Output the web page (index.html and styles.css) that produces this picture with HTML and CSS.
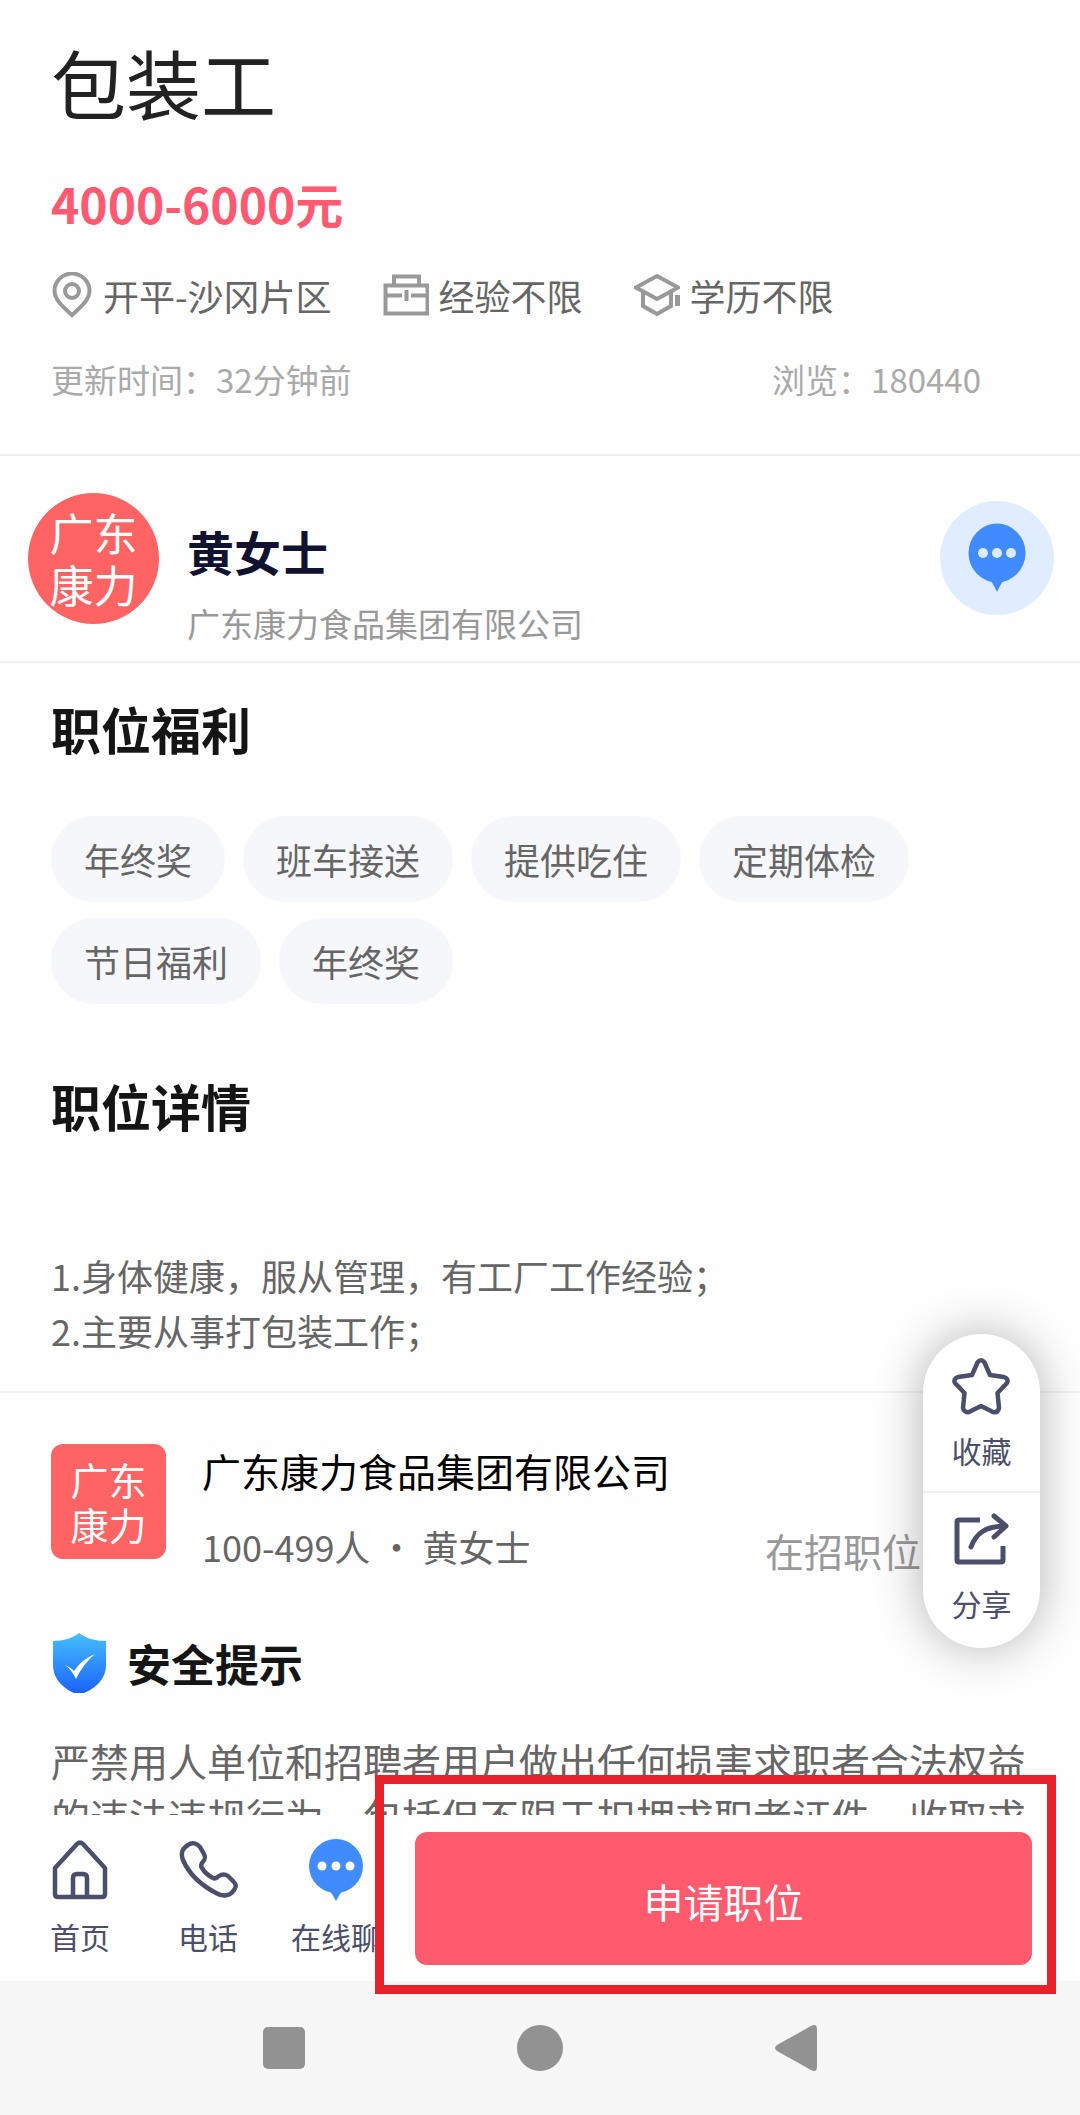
FILE: index.html
```
<!DOCTYPE html>
<html lang="zh-CN">
<head>
    <meta charset="UTF-8">
    <meta name="viewport" content="width=device-width, initial-scale=1.0">
    <title>包装工</title>
    <link rel="stylesheet" href="styles.css">
</head>
<body>
    <main>
        <!-- 职位信息 -->
        <section class="job">
            <h1>包装工</h1>
            <p class="salary">4000-6000元</p>
            <ul class="meta">
                <li>
                    <svg width="42" height="46" viewBox="0 0 42 46" fill="none" stroke="#999" stroke-width="4">
                        <path d="M21 43C14.500 37 3.500 28.500 3.500 19a17.500 17.500 0 0 1 35 0C38.500 28.500 27.500 37 21 43Z"/>
                        <circle cx="21" cy="19" r="7"/>
                    </svg>
                    开平-沙冈片区
                </li>
                <li>
                    <svg width="46" height="46" viewBox="0 0 46 46" fill="none" stroke="#999" stroke-width="4">
                        <path d="M2.500 13.500h42v28h-42zM11 13.500v-9h25v9"/>
                        <path d="M2 23.500h17M28 23.500h17M23.500 18v11"/>
                    </svg>
                    经验不限
                </li>
                <li>
                    <svg width="46" height="46" viewBox="0 0 46 46" fill="none" stroke="#999" stroke-width="4">
                        <path d="M2 15.500 23 4 44 15.500 23 27Z"/>
                        <path d="M9 19v15l14 8 14-8V19"/>
                        <path d="M43.500 23v11" stroke-width="5"/>
                    </svg>
                    学历不限
                </li>
            </ul>
            <div class="stat">
                <span>更新时间：32分钟前</span>
                <span>浏览：180440</span>
            </div>
        </section>

        <!-- 联系人 -->
        <section class="contact">
            <div class="avatar">广东<br>康力</div>
            <div class="contact_text">
                <h2>黄女士</h2>
                <p>广东康力食品集团有限公司</p>
            </div>
            <button class="chat" aria-label="聊天">
                <svg width="58" height="70" viewBox="0 0 58 70">
                    <g fill="#408cff"><ellipse cx="29" cy="30" rx="28.500" ry="29.500"/><path d="M20 55h18q-4 3-9 14-5-11-9-14Z"/></g>
                    <g fill="#deebff"><circle cx="15" cy="30" r="5"/><circle cx="29" cy="30" r="5"/><circle cx="43" cy="30" r="5"/></g>
                </svg>
            </button>
        </section>

        <!-- 福利和详情 -->
        <section class="detail">
            <h2>职位福利</h2>
            <ul class="tags">
                <li>年终奖</li>
                <li>班车接送</li>
                <li>提供吃住</li>
                <li>定期体检</li>
                <li>节日福利</li>
                <li>年终奖</li>
            </ul>
            <h2>职位详情</h2>
            <p class="desc">1.身体健康，服从管理，有工厂工作经验；<br>2.主要从事打包装工作；</p>
        </section>

        <!-- 公司 -->
        <section class="company">
            <div class="logo">广东<br>康力</div>
            <div class="company_text">
                <h3>广东康力食品集团有限公司</h3>
                <p>100-499人 · 黄女士</p>
            </div>
            <a href="#" class="jobs">在招职位</a>
        </section>

        <section class="safe">
            <h2>
                <svg width="55" height="62" viewBox="0 0 55 62">
                    <defs>
                        <linearGradient id="shield" x1="0" y1="0" x2="0" y2="1">
                            <stop offset="0" stop-color="#45c0fb"/>
                            <stop offset="1" stop-color="#1c62fe"/>
                        </linearGradient>
                    </defs>
                    <path fill="url(#shield)" d="M28 1C34 6 44 9 55 9v24c0 15-12 24-22 28H23C14 57 2 48 2 33V9C12 9 22 6 28 1Z"/>
                    <path fill="#fff" d="M14 33q5 2 9 6 8-12 21-17-12 10-19 25-4-9-11-14Z"/>
                </svg>
                安全提示
            </h2>
            <p>严禁用人单位和招聘者用户做出任何损害求职者合法权益的违法违规行为，包括但不限于扣押求职者证件、收取求职者财物等。</p>
        </section>

        <!-- 右侧悬浮按钮 -->
        <div class="float">
            <button>
                <svg width="60" height="58" viewBox="0 0 60 58" fill="none" stroke="#4c4f6b" stroke-width="4.500" stroke-linejoin="round">
                    <path d="M25.500 4.500Q29 0 32.500 4.500L38 17l14 2q5 2 3 6L45.500 35 47 50q-1 5-6 4L29 48l-12 6q-5 1-6-4l1.500-15L3 25q-2-4 3-6l14-2Z"/>
                </svg>
                收藏
            </button>
            <button>
                <svg width="60" height="58" viewBox="0 0 60 58" fill="none" stroke="#4c4f6b" stroke-width="5" stroke-linejoin="round">
                    <path d="M28 9H7q-2 0-2 2v38q0 2 2 2h42q2 0 2-2V35"/>
                    <path d="M19 36C24 22 34 15 54 15M42 5l12 10-12 11" stroke-linecap="round"/>
                </svg>
                分享
            </button>
        </div>
    </main>

    <footer>
        <nav class="bar">
            <a href="#">
                <svg width="60" height="62" viewBox="0 0 60 62" fill="none" stroke="#4c4f6b" stroke-width="4.500" stroke-linejoin="round">
                    <path d="M5 29 27 5q3-3 6 0l22 24v26q0 3-3 3H8q-3 0-3-3Z"/>
                    <path d="M23 58V39q0-4 4-4h6q4 0 4 4v19"/>
                </svg>
                首页
            </a>
            <a href="#">
                <svg width="60" height="62" viewBox="0 0 60 62" fill="none" stroke="#4c4f6b" stroke-width="4.500" stroke-linejoin="round">
                    <path d="M10 6c4-3 9-2 12 2l4 7c2 4 1 6-2 9-1 2-1 4 0 5 3 5 7 8 11 10 2 1 4 0 6-2 3-2 6-2 9 0l5 5c4 4 3 6 1 9-4 6-11 7-18 3C21 45 11 35 5 21 2 13 5 9 10 6Z"/>
                </svg>
                电话
            </a>
            <a href="#">
                <svg width="60" height="62" viewBox="0 0 60 62">
                    <g fill="#408cff"><circle cx="30" cy="27" r="27"/><path d="M22 50h16q-3 3-8 12-5-9-8-12Z"/></g>
                    <g fill="#fff"><circle cx="16" cy="27" r="4.500"/><circle cx="30" cy="27" r="4.500"/><circle cx="44" cy="27" r="4.500"/></g>
                </svg>
                在线聊
            </a>
            <div class="apply">
                <button>申请职位</button>
                <span class="mark"></span>
            </div>
        </nav>

        <!-- 系统导航键 -->
        <div class="system">
            <svg width="48" height="48"><rect x="3" y="3" width="42" height="42" rx="5"/></svg>
            <svg width="48" height="48"><circle cx="24" cy="24" r="23"/></svg>
            <svg width="48" height="48"><path d="M5 21 39 2q6-3 6 3v38q0 6-6 3L5 27q-4-3 0-6Z"/></svg>
        </div>
    </footer>
</body>
</html>
```
FILE: styles.css
```
*{margin: 0;padding: 0;box-sizing: border-box;}
body{
    display: flex;
    flex-direction: column;
    height: 100vh;
    overflow: hidden;
    background: #fefefe;
    color: #666;
    font-family: "Noto Sans CJK SC", sans-serif;
    font-size: 36px;
}
ul{list-style: none;}
a{color: inherit;text-decoration: none;}
button{border: 0;background: none;color: inherit;font: inherit;cursor: pointer;}
svg{display: block;flex: none;}

main{position: relative;flex: 1;min-height: 0;overflow: hidden;}
section{padding: 0 51px;}
h2{font-size: 50px;line-height: 64px;color: #151515;}

/* 职位信息 */
.job{padding-top: 37px;padding-bottom: 51px;border-bottom: 2px solid #f0f0f0;}
.job h1{font-size: 75px;font-weight: 400;line-height: 90px;color: #222;}
.salary{margin-top: 44px;font-size: 48px;font-weight: 700;line-height: 64px;color: #ff5a72;}
.meta{display: flex;gap: 51px;margin-top: 34px;line-height: 52px;}
.meta li{display: flex;align-items: center;gap: 10px;}
.stat{
    display: flex;
    justify-content: space-between;
    margin-top: 34px;
    padding-right: 48px;
    font-size: 33px;
    line-height: 48px;
    color: #aaa;
}

/* 联系人 */
.contact{
    display: flex;
    align-items: flex-start;
    padding: 37px 26px 14px 28px;
    border-bottom: 2px solid #f0f0f0;
}
.avatar{
    width: 131px;
    height: 131px;
    padding-top: 13px;
    border-radius: 50%;
    background: #ff6464;
    color: #fff;
    font-size: 44px;
    line-height: 52px;
    text-align: center;
}
.contact_text{flex: 1;margin-left: 28px;padding-top: 26px;}
.contact_text h2{font-size: 47px;color: #10122f;}
.contact_text p{margin-top: 16px;font-size: 33px;line-height: 48px;color: #999;}
.chat{
    display: flex;
    align-items: center;
    justify-content: center;
    width: 114px;
    height: 114px;
    margin-top: 8px;
    border-radius: 50%;
    background: #e0ecff;
}

/* 福利和详情 */
.detail{padding-top: 33px;padding-bottom: 33px;border-bottom: 2px solid #f0f0f0;}
.tags{display: flex;flex-wrap: wrap;gap: 16px 18px;margin: 56px 0 69px;}
.tags li{padding: 0 33px;border-radius: 43px;background: #f6f7fb;line-height: 86px;}
.desc{margin-top: 111px;line-height: 55px;}

/* 公司 */
.company{display: flex;padding-top: 49px;}
.logo{
    width: 115px;
    height: 115px;
    margin-top: 2px;
    padding-top: 12px;
    border-radius: 12px;
    background: #ff6464;
    color: #fff;
    font-size: 38px;
    line-height: 45px;
    text-align: center;
}
.company_text{flex: 1;margin-left: 36px;}
.company h3{font-size: 39px;font-weight: 400;line-height: 56px;color: #000;}
.company p{margin-top: 24px;line-height: 48px;}
.jobs{align-self: flex-end;margin-right: 108px;font-size: 39px;line-height: 40px;color: #999;}

.safe{padding-top: 61px;}
.safe h2{display: flex;align-items: center;gap: 21px;font-size: 44px;}
.safe p{margin-top: 38px;font-size: 39px;line-height: 55px;}

.float{
    position: absolute;
    right: 40px;
    bottom: 167px;
    width: 117px;
    border-radius: 59px;
    background: #fff;
    box-shadow: 0 0 48px rgba(0, 0, 0, .3);
    color: #4c4f6b;
}
.float button{
    display: flex;
    flex-direction: column;
    align-items: center;
    gap: 12px;
    width: 100%;
    height: 157px;
    padding-top: 24px;
    font-size: 30px;
    line-height: 44px;
}
.float button + button{padding-top: 18px;border-top: 2px solid #f0f0f0;}

/* 底部 */
.bar{display: flex;height: 166px;padding-left: 16px;color: #4c4f6b;font-size: 30px;}
.bar a{
    display: flex;
    flex: none;
    flex-direction: column;
    align-items: center;
    gap: 13px;
    width: 128px;
    padding-top: 24px;
    line-height: 44px;
}
.apply{position: relative;flex: 1;margin-left: -20px;padding: 17px 48px 16px 35px;background: #fefefe;}
.apply button{
    width: 100%;
    height: 133px;
    padding-top: 4px;
    border-radius: 12px;
    background: #ff5a6e;
    color: #fff;
    font-size: 40px;
}
.mark{position: absolute;top: -40px;right: 24px;bottom: -13px;left: -5px;border: 9px solid #e8222a;pointer-events: none;}

.system{
    display: flex;
    justify-content: center;
    gap: 208px;
    padding: 43px 0;
    background: #f6f6f6;
    fill: #929292;
}
```
